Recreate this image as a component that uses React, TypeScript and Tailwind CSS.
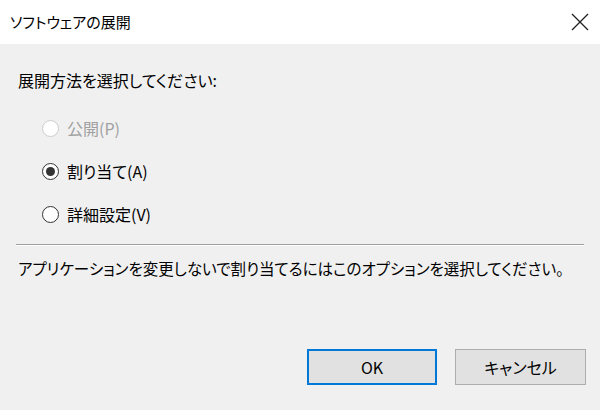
import React from 'react';

const font = { fontFamily: '"Noto Sans CJK JP", "Noto Sans", sans-serif' };

function Radio({
  label,
  checked,
  disabled,
}: {
  label: string;
  checked?: boolean;
  disabled?: boolean;
}) {
  return (
    <div className="flex h-[20px] items-center">
      <span
        className={`flex h-[17px] w-[17px] items-center justify-center rounded-full border bg-white ${
          disabled ? 'border-[#cccccc]' : 'border-[#333333]'
        }`}
      >
        {checked && <span className="h-[9px] w-[9px] rounded-full bg-[#333333]" />}
      </span>
      <span className={`ml-[8px] text-[16px] leading-[20px] ${disabled ? 'text-[#a0a0a0]' : 'text-black'}`}>
        {label}
      </span>
    </div>
  );
}

export default function App() {
  return (
    <div
      className="flex h-[410px] w-[600px] flex-col bg-[#f0f0f0] [font-feature-settings:'palt']"
      style={font}
    >
      <div className="flex h-[44px] items-center justify-between bg-white pl-[10px] pr-[11px]">
        <span className="text-[15px] leading-[20px] text-black">ソフトウェアの展開</span>
        <svg width="18" height="18" viewBox="0 0 18 18" className="text-[#222]">
          <path d="M1 1 L17 17 M17 1 L1 17" stroke="currentColor" strokeWidth="1.3" fill="none" />
        </svg>
      </div>

      <div className="mt-[26px] pl-[18px] text-[16px] leading-[20px] text-black">
        展開方法を選択してください:
      </div>

      <div className="ml-[42px] mt-[28px] flex flex-col gap-[23px]">
        <Radio label="公開(P)" disabled />
        <Radio label="割り当て(A)" checked />
        <Radio label="詳細設定(V)" />
      </div>

      <div className="mx-[16px] mt-[20px] h-[1px] bg-[#a0a0a0]" />
      <div className="mx-[16px] h-[1px] bg-white" />

      <div className="mt-[12px] pl-[18px] text-[15.5px] leading-[20px] text-black">
        アプリケーションを変更しないで割り当てるにはこのオプションを選択してください。
      </div>

      <div className="mt-auto flex justify-end gap-[18px] pb-[25px] pr-[14px]">
        <button className="h-[36px] w-[130px] border-2 border-[#0078d7] bg-[#e1e1e1] text-[16px] text-black">
          OK
        </button>
        <button className="h-[36px] w-[131px] border border-[#adadad] bg-[#e1e1e1] text-[16px] text-black">
          キャンセル
        </button>
      </div>
    </div>
  );
}
